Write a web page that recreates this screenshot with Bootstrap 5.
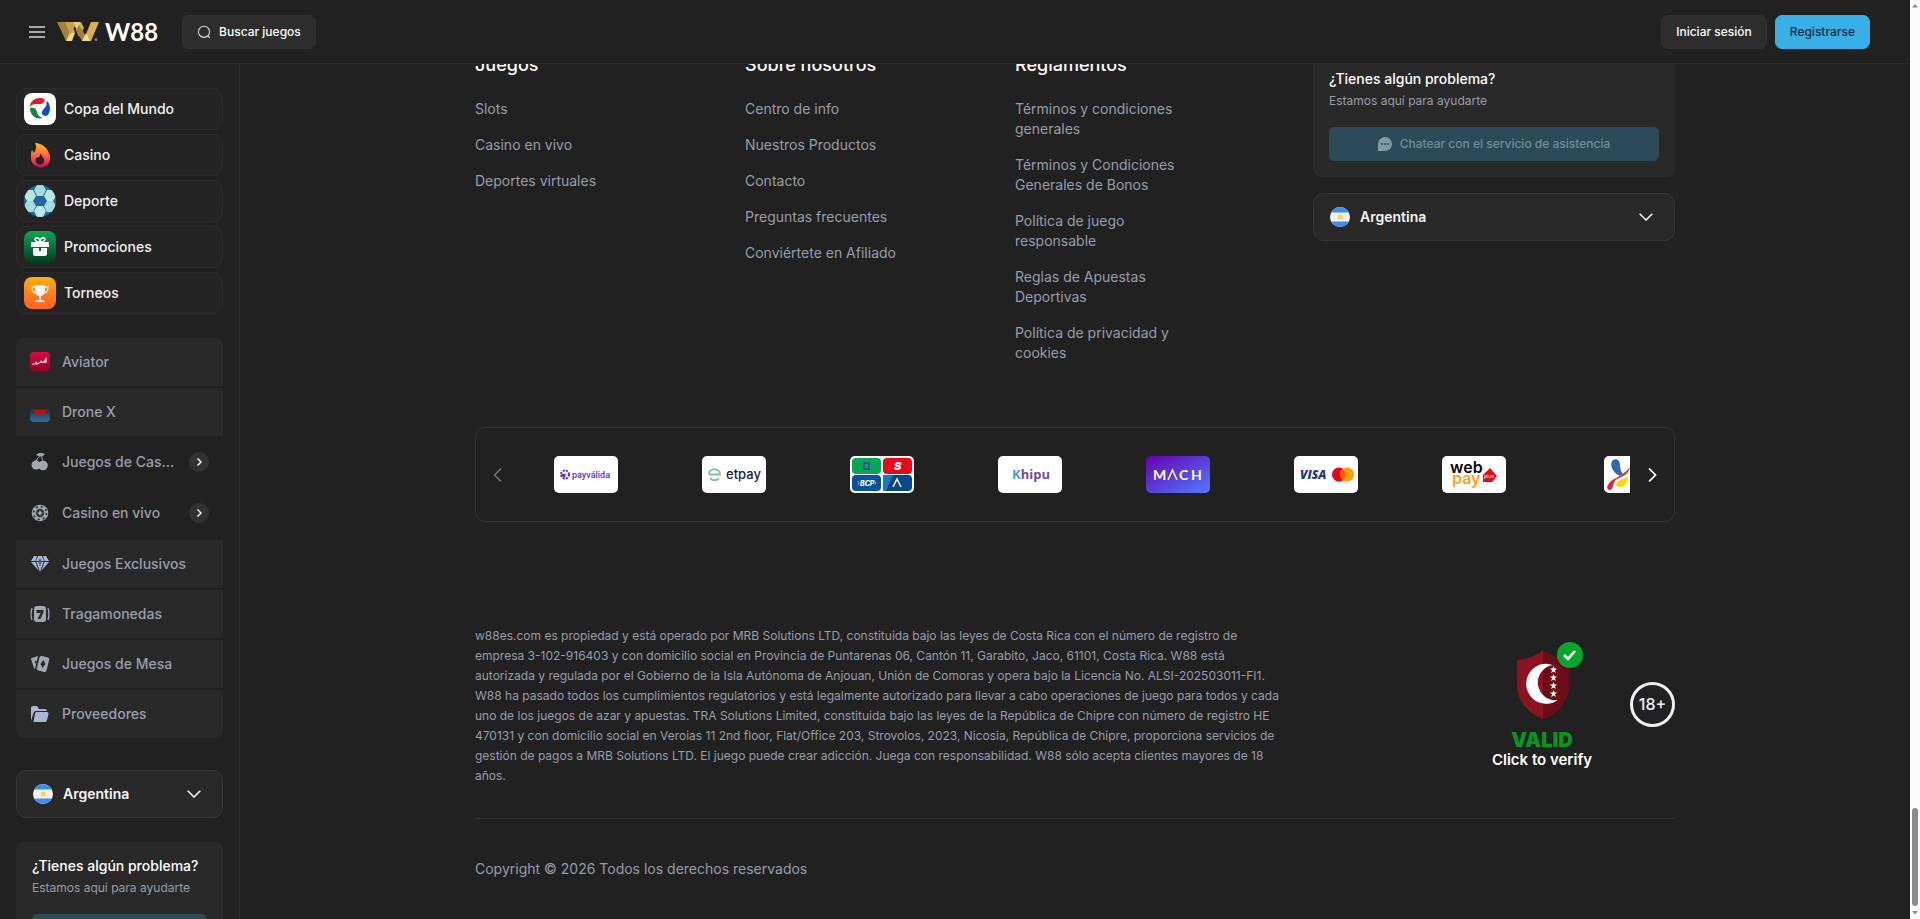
<!DOCTYPE html>
<html lang="es">
<head>
<meta charset="utf-8">
<meta name="viewport" content="width=device-width, initial-scale=1">
<title>W88</title>
<link rel="stylesheet" href="https://cdn.jsdelivr.net/npm/bootstrap@5.3.0/dist/css/bootstrap.min.css">
<style>
:root{--bg:#212121;--panel:#292929;--line:#323232;--muted:#989dab;--brand:#38b0e7}
body{background:var(--bg);color:#f2f2f2;font-family:Inter,"Liberation Sans",sans-serif;font-size:14px;line-height:20px}
a{color:inherit;text-decoration:none}
.shell{min-width:0}
.topbar{height:64px;border-bottom:1px solid #2a2a2a;padding:0 40px 0 29px}
.brand{gap:6px}
.brand-name{font:bold 24px/24px Lato,sans-serif;color:#fff}
.btn-bar{--bs-btn-font-size:12px;--bs-btn-font-weight:500;--bs-btn-line-height:16px;--bs-btn-padding-y:8px;--bs-btn-padding-x:14px;--bs-btn-border-radius:7px;--bs-btn-color:#fff;--bs-btn-bg:#2d2d2d;--bs-btn-border-color:#303030;--bs-btn-hover-color:#fff;--bs-btn-hover-bg:#383838}
.btn-brand{--bs-btn-color:#0c2c3d;--bs-btn-bg:var(--brand);--bs-btn-border-color:var(--brand)}
.sidebar{flex:0 0 240px;border-right:1px solid #2c2c2c;padding:24px 16px 0;overflow:hidden}
.promo{height:42px;background:#242424;border:1px solid #2b2b2b;border-radius:10px;padding:0 7px;font-weight:500;gap:8px}
.menu{display:grid;grid-template-columns:minmax(0,1fr);gap:2px;border-radius:8px;overflow:hidden;margin:24px 0 32px;font-weight:500;color:var(--muted)}
.menu a{height:48px;background:var(--panel);padding:0 14px;gap:12px}
.menu a.parent{background:none}
.menu a.parent + a.parent{height:50px}
.menu svg.glyph{color:#a3a7b3;fill:currentColor}
.more{width:20px;height:20px;border-radius:50%;background:#323232;color:#fff}
.country .form-select{height:48px;background:var(--panel);border:1px solid #363636;border-radius:10px;color:#f5f5f5;font-size:14px;font-weight:600;line-height:20px;padding:0 46px}
.country .flag{position:absolute;left:17px;top:14px;pointer-events:none}
.country .arrow{position:absolute;right:22px;top:20px;pointer-events:none}
.help{background:var(--panel);border-radius:8px;padding:16px}
.help h2{font-size:14px;line-height:16px;font-weight:500;color:#fff;margin:0 0 4px}
.help p{font-size:12px;color:var(--muted);margin:0 0 16px}
.btn-chat{--bs-btn-font-size:12px;--bs-btn-font-weight:500;--bs-btn-line-height:16px;--bs-btn-padding-y:8px;--bs-btn-border-radius:5px;--bs-btn-disabled-bg:#2c4a58;--bs-btn-disabled-border-color:#2c4a58;--bs-btn-disabled-color:#738d98;--bs-btn-disabled-opacity:1}
.page{min-width:0;overflow:hidden}
.footer-wrap{max-width:1200px;width:100%}
.link-col{flex:0 1 270px;padding-right:80px}
.link-col h2{font-size:18px;line-height:28px;font-weight:500;color:#fff;margin:0 0 20px}
.link-col ul{display:grid;gap:16px;color:var(--muted)}
.aside{flex:0 1 362px}
.payments{margin:64px 0 104px;border:1px solid var(--line);border-radius:10px;height:95px}
.slides{min-width:0;flex:1;overflow:hidden}
.slide{flex:0 0 148px}
.slide svg{border-radius:5px}
.arrow-btn{background:none;border:0;padding:0;color:#fff;display:flex;justify-content:center}
.prev{flex:0 0 36px;padding-left:6px;color:#777}
.next{flex:0 0 44px}
.legal{font-size:12px;color:var(--muted);flex:0 1 808px}
.seal{width:100px;font-size:15px;font-weight:600;white-space:nowrap}
.valid{color:#089522;font-size:20px;font-weight:900}
.adult{width:45px;height:45px;margin-left:38px;border:3px solid #f0f0f0;border-radius:50%;font-size:16px;font-weight:500}
.copy{border-top:1px solid var(--line);padding:40px 0;margin-top:32px;color:var(--muted)}
.scroll{flex:0 0 10px;background:#fcfcfc;padding:4px 0}
.thumb{width:6px;height:98px;border-radius:3px;background:#8b8b8b;margin-bottom:5px}
</style>
</head>
<body class="d-flex vh-100 overflow-hidden">
<svg width="0" height="0" class="position-absolute" aria-hidden="true">
  <defs>
    <clipPath id="round"><circle cx="10" cy="10" r="10"/></clipPath>
    <symbol id="flag-ar" viewBox="0 0 20 20"><g clip-path="url(#round)"><path fill="#f1f1f1" d="M0 0h20v20H0z"/><path fill="#3d8df0" d="M0 0h20v5.5H0zM0 14.5h20V20H0z"/></g><circle cx="10.3" cy="10" r="2.6" fill="#fbd45c"/></symbol>
    <symbol id="down" viewBox="0 0 14 8"><path d="M.7.8 7 7 13.300.8" fill="none" stroke="#f5f5f5" stroke-width="1.6"/></symbol>
    <symbol id="right" viewBox="0 0 10 10"><path d="M3.500 1.500 7 5 3.500 8.500" fill="none" stroke="currentColor" stroke-width="1.400"/></symbol>
  </defs>
</svg>
<div class="shell d-flex flex-column flex-grow-1">
  <header class="topbar d-flex align-items-center flex-shrink-0">
    <button class="arrow-btn" aria-label="Menú"><svg width="16" height="12"><path d="M0 1h16M0 6h16M0 11h16" stroke="#a6a6a6" stroke-width="2"/></svg></button>
    <a href="#" class="brand d-flex align-items-center ms-2 ps-1">
      <svg width="42" height="20" viewBox="0 0 42 20"><path d="M0 0h9l6 13-3 6H9z" fill="#a0823a"/><path d="M15 4l3 6-4 9H9z" fill="#d5af58"/><path d="M8 0h8l2 4-5 9z" fill="#c9a14c"/><path d="M16 0h8l-4 9z" fill="#e6cb8b"/><path d="M14 11l4 0-3 8H9z" fill="#e9d196"/><path d="M24 0l3 6-5 9-3-7z" fill="#d5af58"/><path d="M19 8l3-5 4 6 5 10h-6z" fill="#a0823a"/><path d="M34 0h8l-8 19h-8z" fill="#d5af58"/><path d="M29 11l4 8h-8z" fill="#ecd9a0"/><circle cx="39" cy="17.500" r="1.500" fill="#777"/></svg>
      <span class="brand-name">W88</span>
    </a>
    <button class="btn btn-bar d-flex align-items-center gap-2 ms-4"><svg width="14" height="14" viewBox="0 0 14 14" fill="none" stroke="#ddd" stroke-width="1.100"><circle cx="7" cy="6.800" r="5.600"/><path d="m11 11 1.800 1.800"/></svg>Buscar juegos</button>
    <div class="ms-auto d-flex gap-2">
      <button class="btn btn-bar">Iniciar sesión</button>
      <button class="btn btn-bar btn-brand">Registrarse</button>
    </div>
  </header>
  <div class="d-flex flex-grow-1 overflow-hidden">
    <nav class="sidebar">
      <div class="d-grid gap-1">
        <a href="#" class="promo d-flex align-items-center"><svg width="32" height="32"><rect width="32" height="32" rx="8" fill="#fff"/><path d="M6 14C6 8 11 5 16 5c4 0 6 2 4 4-2 3-5 2-8 2-3 0-5 1-6 3z" fill="#dc1f2b"/><path d="M23 8c3 3 4 8 2 12-1 3-4 4-6 2-3-3 1-6 3-9 1-2 0-4 1-5z" fill="#0b4fd0"/><path d="M6 15c4-1 6 0 7 4 1 4 3 5 6 6-7 2-13-3-13-10z" fill="#0d8544"/></svg>Copa del Mundo</a>
        <a href="#" class="promo d-flex align-items-center"><svg width="32" height="32"><defs><linearGradient id="fire" x2="0" y2="1"><stop stop-color="#ffbf28"/><stop offset=".45" stop-color="#ff7240"/><stop offset="1" stop-color="#ec0063"/></linearGradient></defs><path d="M11 4c7 0 13 5 15 13 1 7-3 11-9 11S6 24 7 17c0-2 0-4 1-6l2 3c2-3 3-6 1-10z" fill="url(#fire)"/><path d="M16 14c1 3 5 5 4 9-1 3-6 4-8 0-1-2 0-4 1-5l1 1c2-1 2-3 2-5z" fill="#242424"/></svg>Casino</a>
        <a href="#" class="promo d-flex align-items-center"><svg width="32" height="32"><defs><clipPath id="ball"><circle cx="16" cy="16" r="16"/></clipPath></defs><g clip-path="url(#ball)"><path fill="#226797" d="M0 0h32v32H0z"/><g fill="#a3dcdb"><path d="M13 0h6l3 5-3 6h-6l-3-6z"/><path d="M4 5h5l3 6-3 5H3l-3-5z" fill="#b9e4e0"/><path d="M23 5h5l4 6-3 5h-6l-3-5z" fill="#bae7e1"/><path d="M3 16h6l3 5-3 6H4l-4-6z"/><path d="M23 16h6l3 5-4 6h-5l-3-6z"/><path d="M13 21h6l3 5-3 6h-6l-3-6z" fill="#bde7e3"/></g></g></svg>Deporte</a>
        <a href="#" class="promo d-flex align-items-center"><svg width="32" height="32"><defs><linearGradient id="green" x2="0" y2="1"><stop stop-color="#11a455"/><stop offset="1" stop-color="#043b20"/></linearGradient></defs><rect width="32" height="32" rx="8" fill="url(#green)"/><path d="M8 11h16q1 0 1 1v4H7v-4q0-1 1-1zM9 17h6v3h2v-3h6v6q0 2-2 2H11q-2 0-2-2z" fill="#fff"/><path d="M16 11c-5 0-6-3-4-4s4 1 4 4c0-3 2-5 4-4s1 4-4 4z" fill="none" stroke="#fff" stroke-width="1.500"/></svg>Promociones</a>
        <a href="#" class="promo d-flex align-items-center"><svg width="32" height="32"><defs><linearGradient id="gold" x2="0" y2="1"><stop stop-color="#f2b40c"/><stop offset=".7" stop-color="#ff7022"/><stop offset="1" stop-color="#ff6526"/></linearGradient></defs><rect width="32" height="32" rx="8" fill="url(#gold)"/><path d="M11 8h10v5c0 3-2 6-4 6v4q4 0 4 2H11q0-2 4-2v-4c-2 0-4-3-4-6z" fill="#f3f5f8"/><path d="M11 10H8c0 4 1 5 4 6M21 10h3c0 4-1 5-4 6" fill="none" stroke="#f8dcc5" stroke-width="1.500"/></svg>Torneos</a>
      </div>
      <div class="menu">
        <a href="#" class="d-flex align-items-center"><svg width="20" height="20"><defs><linearGradient id="red" x2="0" y2="1"><stop stop-color="#df0a43"/><stop offset="1" stop-color="#8e0023"/></linearGradient></defs><rect width="20" height="20" rx="4" fill="url(#red)"/><path d="M2 12l3-1 1-2 1 2 3-1 1-2 2 2 2-3 2-2-.5 4 1 1-2 1-5 0-4 2-1-1-3 1z" fill="#f5c7d1"/></svg>Aviator</a>
        <a href="#" class="d-flex align-items-center"><svg width="20" height="20"><defs><linearGradient id="blue" x2="0" y2="1"><stop offset=".3" stop-color="#292929"/><stop offset="1" stop-color="#2c73a5"/></linearGradient></defs><rect width="20" height="20" rx="4" fill="url(#blue)"/><path d="M1 7l4 1h10l4-1-5 4-4 3-4-3z" fill="#c80d12"/></svg>Drone X</a>
        <a href="#" class="parent d-flex align-items-center"><svg class="glyph flex-shrink-0" width="20" height="20"><circle cx="6" cy="13" r="4.500"/><circle cx="13" cy="13.500" r="4.800"/><path d="M6 3c3-3 6-2 9-1-2 3-5 3-9 1z"/><path d="M11 3c-3 2-4 4-5 7M11 3c1 2 1 4 2 7" fill="none" stroke="currentColor"/></svg><span class="text-truncate">Juegos de Casino</span><span class="more ms-auto flex-shrink-0 d-flex align-items-center justify-content-center"><svg width="10" height="10"><use href="#right"/></svg></span></a>
        <a href="#" class="parent d-flex align-items-center"><svg class="glyph" width="20" height="20"><circle cx="10" cy="10" r="8.300"/><circle cx="10" cy="10" r="6.500" fill="none" stroke="#333" stroke-width="1.700" stroke-dasharray="2 3.100"/><circle cx="10" cy="10" r="4.200" fill="#333"/><path d="M10 7l1 2 2 1-2 1-1 2-1-2-2-1 2-1z"/></svg>Casino en vivo<span class="more ms-auto d-flex align-items-center justify-content-center"><svg width="10" height="10"><use href="#right"/></svg></span></a>
        <a href="#" class="d-flex align-items-center"><svg width="20" height="20" fill="#a9b6d6"><path d="M4 2h3L5.500 7H1zM8 2h4l2 5H6zM13 2h3l3 5h-4.500zM1 8h4.500l3 8.500zM6.500 8h7L10 18zM19 8h-4.500l-3 8.500z"/><path d="M8.500 7 10 4l1.500 3L10 13z" fill="#4a546c"/></svg>Juegos Exclusivos</a>
        <a href="#" class="d-flex align-items-center"><svg class="glyph" width="20" height="20"><rect x="4" y="2" width="12" height="16" rx="3"/><path d="M2 4q-2 6 0 12M18 4q2 6 0 12" fill="none" stroke="currentColor" stroke-width="1.300"/><path d="M6.500 6h7v2l-3 7H7.500l3-6h-4z" fill="#2a2a2a"/></svg>Tragamonedas</a>
        <a href="#" class="d-flex align-items-center"><svg class="glyph" width="20" height="20"><path d="M1 5q0-1 1-1l6-2-3 13q-1 0-1-1z"/><rect x="8" y="2.500" width="10" height="15" rx="2" transform="rotate(14 13 10)"/><path d="M13.500 6l2 4-3 4-2-4zM5 6l2 2-2 2z" fill="#2a2a2a"/></svg>Juegos de Mesa</a>
        <a href="#" class="d-flex align-items-center"><svg width="20" height="20" fill="#aab6d3"><path d="M1 4q0-2 2-2h4l2 3h6q2 0 2 2H6q-2 0-2.500 2L1 17z"/><path d="M6.500 8H17q2 0 1.500 2L17 16q-.5 2-2 2H3.500L5 9.500q.3-1.500 1.500-1.500z"/></svg>Proveedores</a>
      </div>
      <div class="country position-relative">
        <select class="form-select" aria-label="País"><option>Argentina</option></select>
        <svg class="flag" width="20" height="20"><use href="#flag-ar"/></svg><svg class="arrow" width="14" height="8"><use href="#down"/></svg>
      </div>
      <section class="help mt-4">
        <h2>¿Tienes algún problema?</h2><p>Estamos aquí para ayudarte</p>
        <button class="btn btn-chat w-100" disabled aria-label="Chatear"><svg width="14" height="14"><path d="M0 14V7a7 7 0 1 1 7 7z" fill="#8199a3"/></svg></button>
      </section>
    </nav>
    <main class="page flex-grow-1 d-flex flex-column justify-content-end align-items-center">
      <div class="footer-wrap flex-shrink-0">
        <div class="d-flex">
          <section class="link-col"><h2>Juegos</h2><ul class="list-unstyled mb-0"><li><a href="#">Slots</a></li><li><a href="#">Casino en vivo</a></li><li><a href="#">Deportes virtuales</a></li></ul></section>
          <section class="link-col text-nowrap"><h2>Sobre nosotros</h2><ul class="list-unstyled mb-0"><li><a href="#">Centro de info</a></li><li><a href="#">Nuestros Productos</a></li><li><a href="#">Contacto</a></li><li><a href="#">Preguntas frecuentes</a></li><li><a href="#">Conviértete en Afiliado</a></li></ul></section>
          <section class="link-col"><h2>Reglamentos</h2><ul class="list-unstyled mb-0"><li><a href="#">Términos y condiciones generales</a></li><li><a href="#">Términos y Condiciones Generales de Bonos</a></li><li><a href="#">Política de juego responsable</a></li><li><a href="#">Reglas de Apuestas Deportivas</a></li><li><a href="#">Política de privacidad y cookies</a></li></ul></section>
          <aside class="aside ms-auto pt-1">
            <section class="help mb-3">
              <h2>¿Tienes algún problema?</h2><p>Estamos aquí para ayudarte</p>
              <button class="btn btn-chat w-100 d-flex align-items-center justify-content-center gap-2" disabled><svg width="14" height="14"><path d="M0 14V7a7 7 0 1 1 7 7z" fill="#8199a3"/><path d="M3 7h2M6 7h2M9 7h2" stroke="#2c4a58" stroke-width="1.500"/></svg>Chatear con el servicio de asistencia</button>
            </section>
            <div class="country position-relative">
              <select class="form-select" aria-label="País"><option>Argentina</option></select>
              <svg class="flag" width="20" height="20"><use href="#flag-ar"/></svg><svg class="arrow" width="14" height="8"><use href="#down"/></svg>
            </div>
          </aside>
        </div>
        <div class="payments d-flex align-items-center">
          <button class="arrow-btn prev" aria-label="Anterior"><svg width="9" height="14" fill="none" stroke="currentColor" stroke-width="1.500"><path d="M8 .5 1.500 7 8 13.500"/></svg></button>
          <div class="slides d-flex">
            <div class="slide d-flex justify-content-center"><svg width="64" height="37"><path fill="#fff" d="M0 0h64v37H0z"/><circle cx="11" cy="18.500" r="4" fill="none" stroke="#5b2be0" stroke-width="2" stroke-dasharray="2 1.200"/><path d="M7 18h5l-2 5z" fill="#5b2be0"/><text x="18" y="22" font-family="Roboto" font-size="9" font-weight="500" fill="#5b2be0">payválida</text></svg></div>
            <div class="slide d-flex justify-content-center"><svg width="64" height="37"><path fill="#fff" d="M0 0h64v37H0z"/><path d="M7 18.500h11c0-7-11-7-11 0M8 22c2 3 7 3 9 0" fill="none" stroke="#83c2a5" stroke-width="2"/><text x="24" y="23" font-family="Inter" font-size="13" font-weight="500" fill="#211a39">etpay</text></svg></div>
            <div class="slide d-flex justify-content-center"><svg width="64" height="37"><path fill="#fff" d="M0 0h64v37H0z"/><rect x="2" y="2" width="29" height="16" rx="4" fill="#07a653"/><rect x="33" y="2" width="29" height="16" rx="4" fill="#e50b18"/><rect x="2" y="19" width="29" height="16" rx="4" fill="#06529b"/><rect x="33" y="19" width="29" height="16" rx="4" fill="#05488d"/><path d="M33 19h10l-7 16h-3z" fill="#1679c4"/><path d="M14 7h5v6h-5z" fill="none" stroke="#3554a5" stroke-width="2"/><text x="44" y="14" font-family="Inter" font-size="11" font-weight="900" font-style="italic" fill="#fff">S</text><text x="10" y="30" font-family="Inter" font-size="7" font-weight="800" font-style="italic" fill="#fff">BCP</text><path d="M8 25q2 2 0 4M25 25q2 2 0 4" stroke="#ef8b3c" fill="none"/><path d="m43 31 4-8 4 8" fill="none" stroke="#fff" stroke-width="1.500"/></svg></div>
            <div class="slide d-flex justify-content-center"><svg width="64" height="37"><path fill="#fff" d="M0 0h64v37H0z"/><text x="14" y="23" font-family="Open Sans" font-size="13" font-weight="700" fill="#7b479f"><tspan fill="#5099d3">K</tspan>hipu</text></svg></div>
            <div class="slide d-flex justify-content-center"><svg width="64" height="37"><defs><linearGradient id="mach" x2="1" y2="1"><stop stop-color="#6600af"/><stop offset="1" stop-color="#527bff"/></linearGradient></defs><path fill="url(#mach)" d="M0 0h64v37H0z"/><g font-family="Lato" font-size="14" font-weight="700" fill="#fff"><text x="7" y="24">M</text><text x="33" y="24">C</text><text x="45" y="24">H</text></g><path d="m22 24 4.500-10L31 24" fill="none" stroke="#fff" stroke-width="1.500"/></svg></div>
            <div class="slide d-flex justify-content-center"><svg width="64" height="37"><path fill="#fff" d="M0 0h64v37H0z"/><text x="6" y="23" font-family="Open Sans" font-size="12" font-weight="800" font-style="italic" fill="#243384">VISA</text><circle cx="45" cy="18.500" r="7" fill="#eb001b"/><circle cx="53" cy="18.500" r="7" fill="#ff9d0a"/><path d="M49 13a7 7 0 0 1 0 11 7 7 0 0 1 0-11" fill="#ff5f00"/></svg></div>
            <div class="slide d-flex justify-content-center"><svg width="64" height="37"><path fill="#fff" d="M0 0h64v37H0z"/><text x="8" y="17" font-family="Inter" font-size="16" font-weight="600" fill="#080808">web</text><text x="10" y="28" font-family="Inter" font-size="16" font-weight="600" fill="#f9a51b">pay</text><path d="m48 12 7 8-5 6h-9v-7z" fill="#e90918"/><text x="42" y="22" font-family="Inter" font-size="5" fill="#fff">plus</text></svg></div>
            <div class="slide d-flex justify-content-center"><svg width="36" height="37"><path fill="#fff" d="M0 0h36v37H0z"/><path d="M8 5c4-4 8-1 8 4 0 4 1 7 3 9l-3 2C11 18 5 11 8 5z" fill="#3167ae"/><path d="M26 11c-2 8-7 9-13 12-5 3-3 11-7 11-5 0-3-7 4-11 6-3 10-5 16-12z" fill="#de263b"/><path d="M24 21c0 6-3 10-9 10-6-1-3-7 9-10z" fill="#ffd700"/></svg></div>
          </div>
          <button class="arrow-btn next" aria-label="Siguiente"><svg width="9" height="14" fill="none" stroke="currentColor" stroke-width="1.700"><path d="M1 .5 7.500 7 1 13.500"/></svg></button>
        </div>
        <div class="d-flex align-items-center">
          <p class="legal mb-0">w88es.com es propiedad y está operado por MRB Solutions LTD, constituida bajo las leyes de Costa Rica con el número de registro de empresa 3-102-916403 y con domicilio social en Provincia de Puntarenas 06, Cantón 11, Garabito, Jaco, 61101, Costa Rica. W88 está autorizada y regulada por el Gobierno de la Isla Autónoma de Anjouan, Unión de Comoras y opera bajo la Licencia No. ALSI-202503011-FI1. W88 ha pasado todos los cumplimientos regulatorios y está legalmente autorizado para llevar a cabo operaciones de juego para todos y cada uno de los juegos de azar y apuestas. TRA Solutions Limited, constituida bajo las leyes de la República de Chipre con número de registro HE 470131 y con domicilio social en Veroias 11 2nd floor, Flat/Office 203, Strovolos, 2023, Nicosia, República de Chipre, proporciona servicios de gestión de pagos a MRB Solutions LTD. El juego puede crear adicción. Juega con responsabilidad. W88 sólo acepta clientes mayores de 18 años.</p>
          <a href="#" class="seal ms-auto d-flex flex-column align-items-center text-white">
            <svg width="100" height="88"><path d="M51 8q10 9 26 10v24q0 24-26 35-26-11-26-35V18Q41 17 51 8z" fill="#8b1423"/><path d="M51 8q10 9 26 10v24q0 24-26 35z" fill="#6c0c19"/><path d="M61 23a20 20 0 1 0 5 35 17 17 0 1 1-5-35z" fill="#fff"/><g fill="#fff"><path id="star" d="m61.500 24 1 2.500h2.500l-2 1.800.8 2.700-2.300-1.600-2.300 1.600.8-2.700-2-1.800h2.500z"/><use href="#star" y="8"/><use href="#star" y="16"/><use href="#star" y="24"/></g><circle cx="78" cy="13" r="13" fill="#0aa52d"/><path d="m72 13 4 4 7-8" fill="none" stroke="#fff" stroke-width="2.500"/></svg>
            <span class="valid">VALID</span><span>Click to verify</span>
          </a>
          <span class="adult d-flex align-items-center justify-content-center mb-1">18+</span>
        </div>
        <footer class="copy">Copyright © 2026 Todos los derechos reservados</footer>
      </div>
    </main>
  </div>
</div>
<div class="scroll d-flex flex-column align-items-center justify-content-between" aria-hidden="true">
  <svg width="6" height="4" viewBox="0 0 6 4"><path d="M0 3.500 3 0l3 3.500z" fill="#8b8b8b"/></svg>
  <div class="d-flex flex-column align-items-center"><div class="thumb"></div><svg width="6" height="4" viewBox="0 0 6 4"><path d="M0 0l3 3.500L6 0z" fill="#8b8b8b"/></svg></div>
</div>
<script src="https://cdn.jsdelivr.net/npm/bootstrap@5.3.0/dist/js/bootstrap.bundle.min.js"></script>
</body>
</html>
